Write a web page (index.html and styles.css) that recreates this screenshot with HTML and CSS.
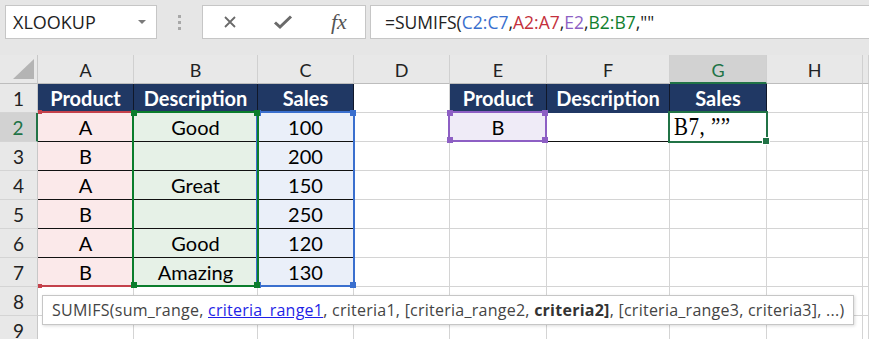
FILE: index.html
```html
<!DOCTYPE html>
<html lang="en">
<head>
  <meta charset="UTF-8">
  <title>SUMIFS</title>
  <link rel="stylesheet" href="styles.css">
</head>
<body>
  <!-- formula bar -->
  <div class="toolbar">
    <div class="namebox">
      <span>XLOOKUP</span>
      <span class="caret"></span>
    </div>
    <div class="grip"><i></i><i></i><i></i></div>
    <div class="fxbox">
      <svg width="14" height="14" viewBox="0 0 14 14"><path d="M2 2 L12 12 M12 2 L2 12" stroke="#6a6a6a" stroke-width="1.8" fill="none"/></svg>
      <svg width="20" height="16" viewBox="0 0 20 16"><path d="M2 8.5 L7 13 L18 2.5" stroke="#6a6a6a" stroke-width="3" fill="none"/></svg>
      <span class="fx">fx</span>
    </div>
    <div class="formula">=SUMIFS(<span class="r-blue">C2:C7</span>,<span class="r-red">A2:A7</span>,<span class="r-purple">E2</span>,<span class="r-green">B2:B7</span>,""</div>
  </div>

  <!-- sheet -->
  <div class="sheet">
    <div class="grid">
      <div class="corner"><svg width="38" height="29"><polygon points="34,4 34,24 13,24" fill="#b4b4b4"/></svg></div>
      <div class="ch">A</div><div class="ch">B</div><div class="ch">C</div><div class="ch">D</div>
      <div class="ch">E</div><div class="ch">F</div><div class="ch sel-col">G</div><div class="ch">H</div><div class="ch"></div>

      <div class="rh">1</div>
      <div class="c th">Product</div><div class="c th">Description</div><div class="c th">Sales</div><div class="c"></div>
      <div class="c th">Product</div><div class="c th">Description</div><div class="c th">Sales</div><div class="c"></div><div class="c"></div>

      <div class="rh sel-row">2</div>
      <div class="c pk ln">A</div><div class="c gn ln">Good</div><div class="c bl ln">100</div><div class="c"></div>
      <div class="c lv ln">B</div><div class="c ln"></div><div class="c ln edit"><span>B7, ””</span></div><div class="c"></div><div class="c"></div>

      <div class="rh">3</div>
      <div class="c pk ln">B</div><div class="c gn ln"></div><div class="c bl ln">200</div><div class="c"></div>
      <div class="c"></div><div class="c"></div><div class="c"></div><div class="c"></div><div class="c"></div>

      <div class="rh">4</div>
      <div class="c pk ln">A</div><div class="c gn ln">Great</div><div class="c bl ln">150</div><div class="c"></div>
      <div class="c"></div><div class="c"></div><div class="c"></div><div class="c"></div><div class="c"></div>

      <div class="rh">5</div>
      <div class="c pk ln">B</div><div class="c gn ln"></div><div class="c bl ln">250</div><div class="c"></div>
      <div class="c"></div><div class="c"></div><div class="c"></div><div class="c"></div><div class="c"></div>

      <div class="rh">6</div>
      <div class="c pk ln">A</div><div class="c gn ln">Good</div><div class="c bl ln">120</div><div class="c"></div>
      <div class="c"></div><div class="c"></div><div class="c"></div><div class="c"></div><div class="c"></div>

      <div class="rh">7</div>
      <div class="c pk">B</div><div class="c gn">Amazing</div><div class="c bl">130</div><div class="c"></div>
      <div class="c"></div><div class="c"></div><div class="c"></div><div class="c"></div><div class="c"></div>

      <div class="rh">8</div>
      <div class="c"></div><div class="c"></div><div class="c"></div><div class="c"></div>
      <div class="c"></div><div class="c"></div><div class="c"></div><div class="c"></div><div class="c"></div>

      <div class="rh">9</div>
      <div class="c"></div><div class="c"></div><div class="c"></div><div class="c"></div>
      <div class="c"></div><div class="c"></div><div class="c"></div><div class="c"></div><div class="c"></div>
    </div>

    <!-- range highlights drawn over the cells -->
    <div class="range rng-a"><b class="h tl"></b><b class="h bl-h"></b></div>
    <div class="range rng-c"><b class="h tl"></b><b class="h tr"></b><b class="h bl-h"></b><b class="h br"></b></div>
    <div class="range rng-b"><b class="h tl"></b><b class="h tr"></b><b class="h bl-h"></b><b class="h br"></b></div>
    <div class="range rng-e"><b class="h tl"></b><b class="h tr"></b><b class="h bl-h"></b><b class="h br"></b></div>
    <div class="range active"><b class="h br"></b></div>

    <div class="tip">SUMIFS(sum_range, <a>criteria_range1</a>, criteria1, [criteria_range2, <strong>criteria2]</strong>, [criteria_range3, criteria3], ...)</div>
  </div>
</body>
</html>
```

FILE: styles.css
```css
body {
  margin: 0;
  padding: 0;
  background-color: #ffffff;
  font-family: "Open Sans", sans-serif;
  overflow: hidden;
}

/* formula bar */
.toolbar {
  height: 55px;
  background-color: #e6e6e6;
  display: flex;
  align-items: flex-start;
  padding-top: 5px;
  box-sizing: border-box;
}

.namebox {
  margin-left: 5px;
  width: 152px;
  height: 34px;
  background-color: #fff;
  border: 1px solid #c6c6c6;
  box-sizing: border-box;
  display: flex;
  align-items: center;
  justify-content: space-between;
  padding: 0 10px 0 7px;
  font-size: 18px;
  color: #222;
}

.caret {
  width: 0;
  height: 0;
  border-left: 4px solid transparent;
  border-right: 4px solid transparent;
  border-top: 4px solid #7a7a7a;
}

.grip {
  width: 45px;
  height: 34px;
  display: flex;
  flex-direction: column;
  align-items: center;
  justify-content: center;
  gap: 3px;
}

.grip i {
  width: 3px;
  height: 3px;
  background-color: #a8a8a8;
}

.fxbox {
  width: 164px;
  height: 34px;
  background-color: #fff;
  border: 1px solid #c6c6c6;
  box-sizing: border-box;
  display: flex;
  align-items: center;
  padding-left: 20px;
  gap: 36px;
}

.fx {
  font-family: "Liberation Serif", serif;
  font-style: italic;
  font-size: 22px;
  color: #555;
  margin-left: 2px;
}

.formula {
  flex: 1;
  margin-left: 4px;
  height: 34px;
  background-color: #fff;
  border: 1px solid #c6c6c6;
  border-right: none;
  box-sizing: border-box;
  padding-left: 14px;
  display: flex;
  align-items: center;
  font-size: 17.5px;
  color: #222;
  white-space: pre;
}

.r-blue { color: #3a6fce; }
.r-red { color: #c4303c; }
.r-purple { color: #8d5fc4; }
.r-green { color: #10802e; }

/* sheet */
.sheet {
  position: relative;
}

.grid {
  display: grid;
  grid-template-columns: 38px 96px 124px 96px 96px 97px 123px 97px 96px 1fr;
  grid-auto-rows: 29px;
  font-family: Lato, sans-serif;
}

.grid > div {
  box-sizing: border-box;
  display: flex;
  align-items: center;
  justify-content: center;
}

.corner {
  background-color: #e8e8e8;
  border-right: 1px solid #c8c8c8;
  border-bottom: 1px solid #bdbdbd;
}

.ch {
  background-color: #e8e8e8;
  border-right: 1px solid #d0d0d0;
  border-bottom: 1px solid #bdbdbd;
  font-size: 18px;
  color: #222;
  padding-top: 2px;
}

.rh {
  background-color: #e8e8e8;
  border-right: 1px solid #c8c8c8;
  border-bottom: 1px solid #d4d4d4;
  font-size: 19px;
  color: #222;
}

.sel-col {
  background-color: #d2d2d2 !important;
  color: #217346 !important;
  border-bottom: 2px solid #217346 !important;
}

.sel-row {
  background-color: #d2d2d2 !important;
  color: #217346 !important;
  border-right: 2px solid #217346 !important;
}

.c {
  border-right: 1px solid #d4d4d4;
  border-bottom: 1px solid #d4d4d4;
  font-size: 20px;
  color: #000;
}

.th {
  background-color: #203864;
  color: #fff;
  font-weight: 700;
  border-right-color: #10182a;
  border-bottom-color: #203864;
}

.pk { background-color: #fbe9ea; border-right-color: #fff; }
.gn { background-color: #e6f1e7; border-right-color: #fff; }
.bl { background-color: #eaeff9; border-right-color: #fff; }
.lv { background-color: #efebf7; }

.ln { border-bottom-color: #111; }

.edit {
  justify-content: flex-start !important;
  padding-left: 4px;
  font-family: "Liberation Serif", serif;
  font-size: 21px;
}

.edit span {
  display: inline-block;
  transform: scaleY(1.2);
  letter-spacing: 0.5px;
}

/* range borders */
.range {
  position: absolute;
  box-sizing: border-box;
}

.range .h {
  position: absolute;
  width: 6px;
  height: 6px;
}

.h.tl { left: -3px; top: -3px; }
.h.tr { right: -3px; top: -3px; }
.h.bl-h { left: -3px; bottom: -3px; }
.h.br { right: -3px; bottom: -3px; }

.rng-a {
  left: 38px;
  top: 56px;
  width: 93px;
  height: 176px;
  border-top: 2px solid #c4414b;
  border-bottom: 2px solid #c4414b;
}

.rng-a .h {
  width: 4px;
  height: 4px;
  background-color: #c4414b;
}

.rng-a .h.tl { left: 0; top: -3px; }
.rng-a .h.bl-h { left: 0; bottom: -3px; }

.rng-b {
  left: 132px;
  top: 56px;
  width: 127px;
  height: 176px;
  border: 2px solid #0a7d2c;
}

.rng-b .h { background-color: #0a7d2c; }

.rng-c {
  left: 256px;
  top: 56px;
  width: 99px;
  height: 176px;
  border: 2px solid #3a6fce;
}

.rng-c .h { background-color: #3a6fce; }

.rng-e {
  left: 448px;
  top: 56px;
  width: 99px;
  height: 31px;
  border: 2px solid #8d5fc4;
}

.rng-e .h { background-color: #8d5fc4; }

.active {
  left: 668px;
  top: 56px;
  width: 100px;
  height: 32px;
  border: 2px solid #217346;
}

.active .h {
  background-color: #217346;
  border: 1px solid #fff;
  right: -4px;
  bottom: -4px;
}

/* argument tooltip */
.tip {
  position: absolute;
  left: 42px;
  top: 240px;
  width: 812px;
  height: 30px;
  box-sizing: border-box;
  background-color: #fff;
  border: 1px solid #c6c6c6;
  box-shadow: 1px 1px 3px rgba(0, 0, 0, 0.15);
  padding-left: 9px;
  display: flex;
  align-items: center;
  font-size: 16px;
  letter-spacing: 0.25px;
  color: #444;
  white-space: pre;
}

.tip a {
  color: #1f1fe6;
  text-decoration: underline;
}

.tip strong {
  color: #333;
}
```
